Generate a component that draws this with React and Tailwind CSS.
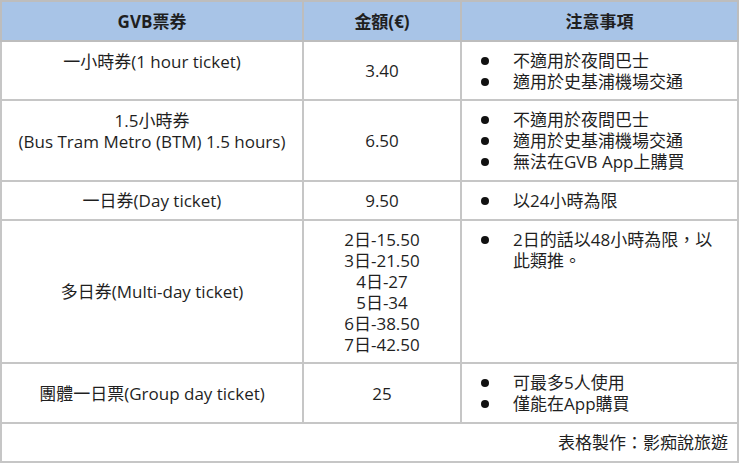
const rows = [
  {
    name: ['一小時券(1 hour ticket)'],
    nameAlign: 'align-top pt-[9px]',
    price: ['3.40'],
    notes: ['不適用於夜間巴士', '適用於史基浦機場交通'],
    h: 'h-[59px]',
  },
  {
    name: ['1.5小時券', '(Bus Tram Metro (BTM) 1.5 hours)'],
    nameAlign: 'align-top pt-[9px]',
    price: ['6.50'],
    notes: ['不適用於夜間巴士', '適用於史基浦機場交通', '無法在GVB App上購買'],
    h: 'h-[81px]',
  },
  {
    name: ['一日券(Day ticket)'],
    nameAlign: 'align-middle',
    price: ['9.50'],
    notes: ['以24小時為限'],
    h: 'h-[39px]',
  },
  {
    name: ['多日券(Multi-day ticket)'],
    nameAlign: 'align-middle',
    price: ['2日-15.50', '3日-21.50', '4日-27', '5日-34', '6日-38.50', '7日-42.50'],
    notes: ['2日的話以48小時為限，以此類推。'],
    h: 'h-[143px]',
  },
  {
    name: ['團體一日票(Group day ticket)'],
    nameAlign: 'align-middle',
    price: ['25'],
    notes: ['可最多5人使用', '僅能在App購買'],
    h: 'h-[60px]',
  },
];

function Notes({ items }) {
  return (
    <ul className="pl-[19px] pr-2">
      {items.map((t) => (
        <li key={t} className="flex">
          <span className="w-[32px] shrink-0 h-[21px] flex items-center">
            <span className="w-[8px] h-[8px] rounded-full bg-[#111]" />
          </span>
          <span>{t}</span>
        </li>
      ))}
    </ul>
  );
}

export default function App() {
  return (
    <div
      className="w-[740px] h-[463px] bg-white text-[#1f1f1f] text-[17px] leading-[21px]"
      style={{ fontFamily: '"Open Sans", "Noto Sans CJK TC", sans-serif' }}
    >
      <table className="w-[739px] border-collapse table-fixed">
        <colgroup>
          <col className="w-[302px]" />
          <col className="w-[158px]" />
          <col />
        </colgroup>
        <thead>
          <tr className="h-[40px] bg-[#a8c4e7]">
            <th className="border-2 border-[#bdbdbd] font-bold">GVB票券</th>
            <th className="border-2 border-[#bdbdbd] font-bold">金額(€)</th>
            <th className="border-2 border-[#bdbdbd] font-bold">注意事項</th>
          </tr>
        </thead>
        <tbody>
          {rows.map((r) => (
            <tr key={r.name[0]} className={r.h}>
              <td className={`border-2 border-[#c6c6c6] text-center ${r.nameAlign}`}>
                {r.name.map((n) => (
                  <div key={n}>{n}</div>
                ))}
              </td>
              <td className="border-2 border-[#c6c6c6] text-center align-middle">
                {r.price.map((p) => (
                  <div key={p}>{p}</div>
                ))}
              </td>
              <td className="border-2 border-[#c6c6c6] align-top pt-[8px]">
                <Notes items={r.notes} />
              </td>
            </tr>
          ))}
          <tr className="h-[39px]">
            <td colSpan={3} className="border-2 border-[#c6c6c6] text-right pr-[9px] align-middle">
              表格製作：影痴說旅遊
            </td>
          </tr>
        </tbody>
      </table>
    </div>
  );
}
